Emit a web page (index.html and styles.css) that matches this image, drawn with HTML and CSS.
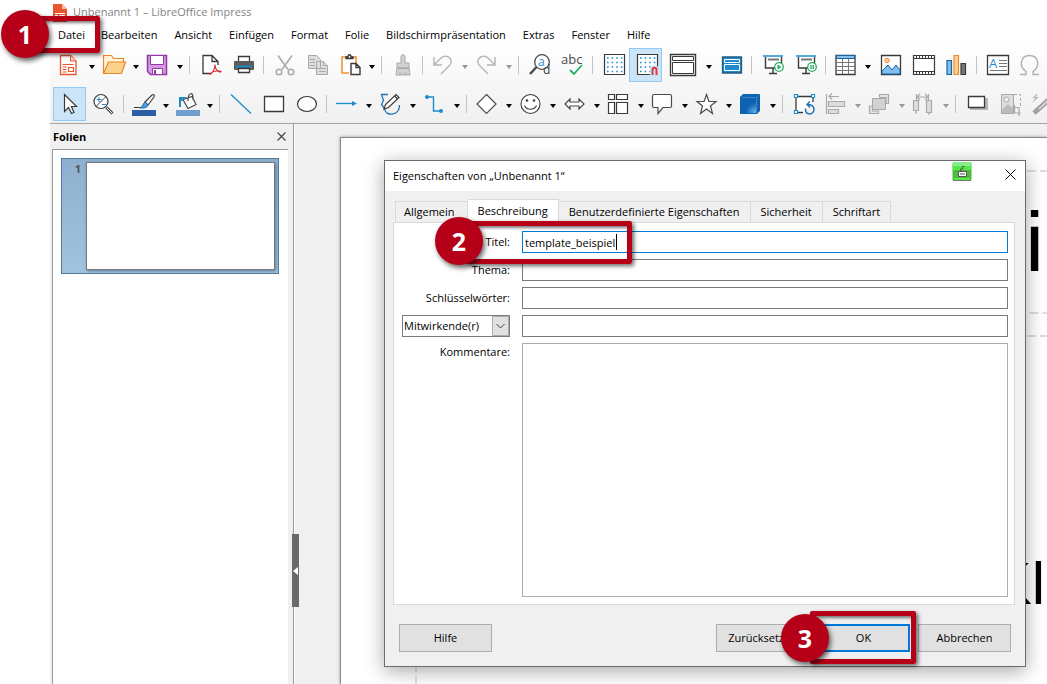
FILE: index.html
```html
<!DOCTYPE html>
<html lang="de">
<head>
<meta charset="utf-8">
<title>Unbenannt 1 – LibreOffice Impress</title>
<link rel="stylesheet" href="styles.css">
</head>
<body>
<div class="app">
  <header class="top">
    <div class="titlebar">
      <svg class="doc" width="14" height="18" viewBox="0 0 14 18"><path fill="#e8562f" d="M0 0h9l5 5v13H0z"/><path fill="#f9b9a2" d="M9 0l5 5H9z"/><path stroke="#fff" fill="none" d="M2 9.500h10M2 11.500h3M2 13.500h3M6.500 11.500h5v3h-5z"/></svg>
      <span>Unbenannt 1 – LibreOffice Impress</span>
    </div>
    <nav class="menu">
      <div class="marked"><button>Datei</button><span class="frame frame-menu"></span><span class="step step-menu">1</span></div>
      <button>Bearbeiten</button><button>Ansicht</button><button>Einfügen</button><button>Format</button><button>Folie</button><button>Bildschirmpräsentation</button><button>Extras</button><button>Fenster</button><button>Hilfe</button>
    </nav>
    <div class="toolbar" role="toolbar" aria-label="Standard">
      <button class="tool" aria-label="Neu"><svg viewBox="0 0 24 24"><path fill="#fff" stroke="#e8562f" stroke-width="1.300" d="M2.500 2.500h10l5.500 5.500v13.500H2.500z"/><path fill="#fbd5c8" stroke="#e8562f" d="M12.500 2.500v5.500H18"/><path fill="none" stroke="#e8562f" stroke-width="1.200" d="M4.500 11.500h11M4.500 14h4M4.500 16.500h4M4.500 19h4M10.500 14.500h5v4h-5z"/></svg></button><button class="drop" aria-label="Vorlagen"></button>
      <button class="tool" aria-label="Öffnen"><svg viewBox="0 0 24 24"><path fill="#fff3d6" stroke="#e8862f" stroke-width="1.200" d="M1.500 20.500v-18h8l2 3h10v4"/><path fill="#fad28c" stroke="#e8862f" stroke-width="1.200" d="M1.500 20.500l5-11.500h17l-4 11.500z"/></svg></button><button class="drop" aria-label="Zuletzt verwendet"></button>
      <button class="tool" aria-label="Speichern"><svg viewBox="0 0 24 24"><path fill="#d49be0" stroke="#9437a4" stroke-width="1.500" d="M1.500 2.500h19v19h-16l-3-3z"/><path fill="#fff" stroke="#9437a4" d="M4.500 2.500h13v9h-13zM6.500 15.500h10v6h-10z"/><path fill="#9437a4" d="M8 17h2v4H8z"/></svg></button><button class="drop" aria-label="Speichern unter"></button>
      <i class="sep"></i>
      <button class="tool" aria-label="Als PDF exportieren"><svg viewBox="0 0 24 24"><path fill="#fff" stroke="#3a3a38" stroke-width="1.300" d="M12 20.500H5v-18h9l6 6V12M14 2.500v6h6"/><path fill="none" stroke="#d8343c" stroke-width="1.100" d="M17 11.500c0 5-3 9-5 10-1-2 8-5 11-3-2 2-6-2-6-7z"/></svg></button>
      <button class="tool" aria-label="Drucken"><svg viewBox="0 0 24 24"><path fill="#fff" stroke="#3a3a38" stroke-width="1.300" d="M7.500 9V3.500h11V9"/><rect x="3" y="8" width="20" height="9" rx="1" fill="#5b5b59"/><path stroke="#1e8bcd" stroke-width="2" d="M5 13.500h16"/><path fill="#fff" stroke="#3a3a38" stroke-width="1.300" d="M7.500 15.500h11v4h-11z"/></svg></button>
      <i class="sep"></i>
      <button class="tool" aria-label="Ausschneiden"><svg viewBox="0 0 24 24"><g fill="none" stroke="#a9a9a9" stroke-width="1.500"><path d="M6 2.500l10 14M20 2.500l-10 14"/><circle cx="7" cy="19" r="2.800"/><circle cx="19" cy="19" r="2.800"/></g></svg></button>
      <button class="tool" aria-label="Kopieren"><svg viewBox="0 0 24 24"><g fill="#ddd" stroke="#a9a9a9"><path d="M3.500 2.500h8l4 4v9h-12zM11.500 8.500h7l4 4v9h-11z"/><path d="M5 6.500h5M5 9.500h5M5 12.500h5M14 15.500h7M14 18.500h7M18.500 8.500v4h4"/></g></svg></button>
      <button class="tool" aria-label="Einfügen"><svg viewBox="0 0 24 24"><path fill="#fff" stroke="#ee9433" stroke-width="1.600" d="M11 20H4V4h14v6"/><path fill="#fff" stroke="#3a3a38" stroke-width="1.400" d="M8 5.500V4h2c0-3 3-3 3 0h2v1.500zM13 10.500h5l4 4v7h-9zM18 10.500v4h4"/></svg></button><button class="drop" aria-label="Inhalte einfügen"></button>
      <i class="sep"></i>
      <button class="tool" aria-label="Format übertragen"><svg viewBox="0 0 24 24"><g fill="#d2d2d2" stroke="#a9a9a9"><path d="M11 10V3q2-3 4 0v7h4v5H7v-5zM7 15h12l1 7H6z"/><path d="M7 15.500h12M10 22v-3M13 22v-2M16 22v-3"/></g></svg></button>
      <i class="sep"></i>
      <button class="tool" aria-label="Rückgängig"><svg viewBox="0 0 24 24"><path fill="none" stroke="#b4b4b4" stroke-width="1.400" d="M3 4v8h8M3 12L10 5c6-5 14 2 8 8l-8 8"/></svg></button><button class="drop off" aria-label="Rückgängig-Liste"></button>
      <button class="tool" aria-label="Wiederherstellen"><svg viewBox="0 0 24 24"><path fill="none" stroke="#b4b4b4" stroke-width="1.400" d="M20 4v8h-8M20 12L13 5C7 0-1 7 5 13l8 8"/></svg></button><button class="drop off" aria-label="Wiederherstellen-Liste"></button>
      <i class="sep"></i>
      <button class="tool" aria-label="Suchen und Ersetzen"><svg viewBox="0 0 24 24"><circle cx="15" cy="9" r="7.300" fill="#fff" stroke="#4b4b49" stroke-width="1.300"/><path stroke="#4b4b49" stroke-width="2.500" d="M9.500 14L3 21"/><text class="glyph" x="11" y="13" font-size="12" fill="#1e8bcd">a</text><text class="glyph" x="16" y="21" font-size="12" fill="#3a3a38">d</text></svg></button>
      <button class="tool" aria-label="Rechtschreibung"><svg viewBox="0 0 24 24"><text class="glyph" x="1" y="11" font-size="13" fill="#4b4b49">abc</text><path fill="none" stroke="#27ae60" stroke-width="1.800" d="M10 17l4 4 8-9"/></svg></button>
      <i class="sep"></i>
      <button class="tool" aria-label="Raster anzeigen"><svg viewBox="0 0 24 24"><path fill="#fff" stroke="#3a3a38" stroke-width="1.200" d="M3.500 1.500h20v20h-20z"/><path stroke="#1e8bcd" stroke-width="1.600" stroke-dasharray="1.600 3" d="M6 5h17M6 9.500h17M6 14h17M6 18.500h17"/></svg></button>
      <button class="tool on" aria-label="Am Raster fangen"><svg viewBox="0 0 24 24"><path fill="#fff" stroke="#3a3a38" stroke-width="1.200" d="M3.500 1.500h20v20h-20z"/><path stroke="#1e8bcd" stroke-width="1.600" stroke-dasharray="1.600 3" d="M6 5h17M6 9.500h17M6 14h12M6 18.500h10"/><path fill="none" stroke="#cce4f7" stroke-width="5" d="M18.500 23v-6c0-3 4-3 4 0v6"/><path fill="none" stroke="#e0393e" stroke-width="2" d="M18.500 22v-5c0-3 4-3 4 0v5"/></svg></button>
      <button class="tool wide" aria-label="Ansichten"><svg viewBox="0 0 28 24"><g fill="#fff" stroke="#3a3a38" stroke-width="1.400"><path d="M1.500 1.500h25v21h-25z"/><path stroke-width="1" d="M3.500 3.500h21v4h-21zM3.500 9.500h21v11h-21z"/></g></svg></button><button class="drop" aria-label="Ansichten wählen"></button>
      <button class="tool" aria-label="Masterfolie"><svg viewBox="0 0 24 24"><path fill="#1e8bcd" stroke="#245a80" stroke-width="1.300" d="M3.500 4h19v16h-19z"/><path fill="#1e8bcd" stroke="#fff" d="M5.500 6.500h15v3h-15zM5.500 11.500h15v6h-15z"/></svg></button>
      <i class="sep"></i>
      <button class="tool" aria-label="Mit der ersten Folie beginnen"><svg viewBox="0 0 24 24"><path stroke="#1e8bcd" stroke-width="1.500" d="M3 3h20"/><path fill="#fff" stroke="#3a3a38" stroke-width="1.400" d="M5.500 4v11h16V4M13 15v5M9 20.500h8"/><path stroke="#777" stroke-width="2" d="M8 6.500h11"/><circle cx="19" cy="14" r="4.300" fill="#fff" stroke="#27ae60" stroke-width="1.300"/><path fill="#27ae60" d="M17.500 11.500l4 2.500-4 2.500z"/></svg></button>
      <button class="tool" aria-label="Mit der aktuellen Folie beginnen"><svg viewBox="0 0 24 24"><path stroke="#1e8bcd" stroke-width="1.500" d="M3 3h20"/><path fill="#fff" stroke="#3a3a38" stroke-width="1.400" d="M5.500 4v11h16V4M13 15v5M9 20.500h8"/><path stroke="#777" stroke-width="2" d="M8 6.500h11"/><circle cx="19" cy="14" r="4.300" fill="#fff" stroke="#27ae60" stroke-width="1.300"/><path stroke="#27ae60" stroke-width="1.400" d="M18 12v4M20.300 12v4"/></svg></button>
      <i class="sep"></i>
      <button class="tool" aria-label="Tabelle"><svg viewBox="0 0 24 24"><path fill="#fff" stroke="#3a3a38" stroke-width="1.300" d="M2 2.500h19v19H2z"/><path fill="#83beec" stroke="#1565a7" d="M2.500 2.500h18v3h-18z"/><path stroke="#777" d="M2 9.500h19M2 13.500h19M2 17.500h19M8.500 6v15M14.500 6v15"/></svg></button><button class="drop" aria-label="Tabellengröße"></button>
      <button class="tool" aria-label="Bild"><svg viewBox="0 0 24 24"><path fill="#fff" stroke="#3a3a38" stroke-width="1.300" d="M3.500 2.500h19v19h-19z"/><path fill="#83beec" stroke="#1565a7" d="M4 21v-3l6-6 4 5 4-5 4 5v4z"/><circle cx="9" cy="7.500" r="2.200" fill="#fbd28c" stroke="#ee8733"/></svg></button>
      <button class="tool" aria-label="Audio oder Video"><svg viewBox="0 0 24 24"><path fill="#fff" stroke="#3a3a38" stroke-width="1.200" d="M2.500 2.500h21v19h-21zM2.500 5.500h21M2.500 18.500h21"/><path stroke="#3a3a38" stroke-width="2" stroke-dasharray="1 2" d="M5 4h18M5 20h18"/></svg></button>
      <button class="tool" aria-label="Diagramm"><svg viewBox="0 0 24 24"><path fill="#83beec" stroke="#1565a7" stroke-width="1.200" d="M3 7.500h4.500v14H3z"/><path fill="#fbd28c" stroke="#ee8733" stroke-width="1.200" d="M10 2.500h4.500v19H10z"/><path fill="#797774" stroke="#3a3a38" stroke-width="1.200" d="M17 10.500h4.500v11H17z"/></svg></button>
      <i class="sep"></i>
      <button class="tool" aria-label="Textfeld"><svg viewBox="0 0 24 24"><path fill="#fff" stroke="#3a3a38" stroke-width="1.300" d="M2.500 2.500h21v19h-21z"/><path stroke="#777" d="M14 7.500h8M14 10.500h8M14 13.500h8M5 17.500h17"/><text class="glyph" x="4" y="15" font-size="13" fill="#1e8bcd">A</text></svg></button>
      <button class="tool" aria-label="Sonderzeichen"><svg viewBox="0 0 24 24"><path fill="none" stroke="#b0b0b0" stroke-width="1.400" d="M2 21.500h6v-3C0 13 3 2.500 11.500 2.500S23 13 15 18.500v3h6"/></svg></button>
    </div>
    <div class="toolbar" role="toolbar" aria-label="Zeichnung">
      <button class="tool on" aria-label="Auswählen"><svg viewBox="0 0 24 24"><path fill="#fff" stroke="#3a3a38" stroke-width="1.200" d="M6.500 2.500v17l4-4 3 6 2.500-1-2.500-6h5z"/></svg></button>
      <button class="tool" aria-label="Zoom"><svg viewBox="0 0 24 24"><circle cx="10" cy="9.500" r="7" fill="#fff" stroke="#3a3a38" stroke-width="1.200"/><path stroke="#3a3a38" d="M15 4.500l-10 10"/><path stroke="#4b4b49" stroke-width="3" d="M15.500 15.500l6 6"/><path stroke="#fff" d="M16 16l5 5"/><path stroke="#1e8bcd" d="M8 5v5M5.500 7.500h5M11 12.500h4"/></svg></button>
      <i class="sep"></i>
      <button class="tool" aria-label="Linienfarbe"><svg viewBox="0 0 24 24"><path fill="#2a5fa5" d="M0 18h24v6H0z"/><path fill="#fff" stroke="#3a3a38" stroke-width="1.100" d="M13 10l7-7c2-1 3 0 2 2l-6 8z"/><path fill="#4da3dd" stroke="#1565a7" d="M13 10l3 3c-1 3-4 3-8 3 3-1 3-5 5-6z"/><path stroke="#3a3a38" d="M2 15.500h6"/></svg></button><button class="drop" aria-label="Linienfarbe wählen"></button>
      <button class="tool" aria-label="Füllfarbe"><svg viewBox="0 0 24 24"><path fill="#729fcf" d="M0 18h24v6H0z"/><path fill="#fff" stroke="#4b4b49" stroke-width="1.200" d="M7 7.500l9-3 4 8-8 4zM12 9c0-9 5-9 5-4v3"/><path fill="#1e8bcd" d="M3 5h8L7 8l-1 1H5v6H3z"/></svg></button><button class="drop" aria-label="Füllfarbe wählen"></button>
      <i class="sep"></i>
      <button class="tool" aria-label="Linie"><svg viewBox="0 0 24 24"><path stroke="#1e8bcd" stroke-width="1.300" d="M3 2.500l20 19"/></svg></button>
      <button class="tool" aria-label="Rechteck"><svg viewBox="0 0 24 24"><path fill="#fff" stroke="#3a3a38" stroke-width="1.300" d="M3.500 4.500h19v15h-19z"/></svg></button>
      <button class="tool" aria-label="Ellipse"><svg viewBox="0 0 24 24"><ellipse cx="13" cy="12" rx="9.500" ry="7.500" fill="#fff" stroke="#3a3a38" stroke-width="1.200"/></svg></button>
      <i class="sep"></i>
      <button class="tool" aria-label="Linien und Pfeile"><svg viewBox="0 0 24 24"><path stroke="#1e8bcd" stroke-width="1.300" d="M1 11.500h17"/><path fill="#1e8bcd" d="M17 9l5 2.500-5 2.500z"/></svg></button><button class="drop" aria-label="Linien wählen"></button>
      <button class="tool" aria-label="Kurven und Polygone"><svg viewBox="0 0 24 24"><path fill="none" stroke="#1e73b7" stroke-width="1.300" d="M9 2.500H2.500l2 6-2 4 3 4C6 25 21 24 20.500 13"/><path fill="#fff" stroke="#3a3a38" stroke-width="1.200" d="M5 17l1.500-4.500L17 2.500l3 3L9.500 15.500zM15.500 4l3 3"/></svg></button><button class="drop" aria-label="Kurven wählen"></button>
      <button class="tool" aria-label="Verbinder"><svg viewBox="0 0 24 24"><path fill="none" stroke="#1e8bcd" stroke-width="1.400" d="M4 5h6.500v14H17"/><circle cx="4" cy="5" r="2" fill="#1e8bcd"/><circle cx="18" cy="19" r="2" fill="#1e8bcd"/></svg></button><button class="drop" aria-label="Verbinder wählen"></button>
      <i class="sep"></i>
      <button class="tool" aria-label="Standardformen"><svg viewBox="0 0 24 24"><path fill="#fff" stroke="#4b4b49" stroke-width="1.200" d="M11.500 2.500l9.500 9.500-9.500 9.500L2 12z"/></svg></button><button class="drop" aria-label="Standardformen wählen"></button>
      <button class="tool" aria-label="Symbolformen"><svg viewBox="0 0 24 24"><g fill="#fff" stroke="#3a3a38" stroke-width="1.100"><circle cx="11.500" cy="12" r="9.500"/><circle cx="8" cy="8.500" r=".8"/><circle cx="15" cy="8.500" r=".8"/><path d="M5.500 13.500c2 5 10 5 12 0"/></g></svg></button><button class="drop" aria-label="Symbolformen wählen"></button>
      <button class="tool" aria-label="Blockpfeile"><svg viewBox="0 0 24 24"><path fill="#fff" stroke="#4b4b49" stroke-width="1.200" d="M2 12l5-5v3h9V7l5 5-5 5v-3H7v3z"/></svg></button><button class="drop" aria-label="Blockpfeile wählen"></button>
      <button class="tool" aria-label="Flussdiagramm"><svg viewBox="0 0 24 24"><path fill="#fff" stroke="#3a3a38" stroke-width="1.200" d="M1.500 2.500h6v5h-6zM9.500 2.500h11v5h-11zM1.500 10.500h6v11h-6zM9.500 10.500h11v11h-11z"/></svg></button><button class="drop" aria-label="Flussdiagramm wählen"></button>
      <button class="tool" aria-label="Legenden"><svg viewBox="0 0 24 24"><path fill="#fff" stroke="#4b4b49" stroke-width="1.200" d="M3 2.500h16q1.500 0 1.500 1.500v10q0 1.500-1.500 1.500h-7l-5 6v-6H3q-1.500 0-1.500-1.500V4Q1.500 2.500 3 2.500z"/></svg></button><button class="drop" aria-label="Legenden wählen"></button>
      <button class="tool" aria-label="Sterne"><svg viewBox="0 0 24 24"><path fill="#fff" stroke="#4b4b49" stroke-width="1.200" d="M11.500 2.500l2.400 7H21l-5.500 4.500 2 7.500-6-4.500-6 4.500 2-7.500L2 9.500h7.100z"/></svg></button><button class="drop" aria-label="Sterne wählen"></button>
      <button class="tool" aria-label="3D-Objekte"><svg viewBox="0 0 24 24"><defs><radialGradient id="cube" cx="1" cy="1" r="1"><stop offset="0" stop-color="#7dbdf0"/><stop offset=".8" stop-color="#0b63b2"/></radialGradient></defs><path fill="#0b63b2" d="M4 2h17v17l-3 3H1V5z"/><path fill="url(#cube)" d="M4 8h14v13H4z"/><path stroke="#3f86c8" fill="none" d="M3 5.500h14.500V21M17.500 5.500l3-3"/></svg></button><button class="drop" aria-label="3D-Objekte wählen"></button>
      <i class="sep"></i>
      <button class="tool" aria-label="Drehen"><svg viewBox="0 0 24 24"><path fill="#fff" stroke="#3a3a38" stroke-width="1.300" d="M12 20.500H5v-16h17V10"/><g fill="#fff" stroke="#1e8bcd" stroke-width="1.200"><path d="M3.500 2.500h3v3h-3zM20.500 2.500h3v3h-3zM3.500 18.500h3v3h-3z"/></g><path fill="none" stroke="#1e73b7" stroke-width="1.500" d="M14.500 16.500c-1 7 8 7 8.500 1 0-3-2-5-7-5M19 9.500l-3 3 3 3"/></svg></button>
      <button class="tool" aria-label="Ausrichten"><svg viewBox="0 0 24 24"><path fill="#ddd" stroke="#a9a9a9" stroke-width="1.200" d="M4.500 9.500h16v5h-16zM4.500 17.500h10v4h-10z"/><path fill="none" stroke="#a9a9a9" stroke-width="1.200" d="M2.500 2v20M15 4.500H5M8 1.500l-3 3 3 3"/></svg></button><button class="drop off" aria-label="Ausrichtung wählen"></button>
      <button class="tool" aria-label="Anordnen"><svg viewBox="0 0 24 24"><path fill="#e6e6e6" stroke="#a9a9a9" stroke-width="1.200" d="M11.500 5V2.500h9v9H18v-6h-6.500M1.500 14v7.500h9V19h-6v-5z"/><path fill="#d2d2d2" stroke="#a9a9a9" d="M4.500 6.500h13v11h-13z"/></svg></button><button class="drop off" aria-label="Anordnung wählen"></button>
      <button class="tool" aria-label="Verteilen"><svg viewBox="0 0 24 24"><path fill="#ddd" stroke="#a9a9a9" stroke-width="1.200" d="M1.500 8.500h5v10h-5zM14.500 8.500h5v12h-5z"/><path fill="none" stroke="#a9a9a9" stroke-width="1.200" d="M4 19v3M17 21v2M4.500 2v6M16.500 2v6M5 5h11M8 2L5 5l3 3M13 2l3 3-3 3"/></svg></button><button class="drop off" aria-label="Verteilung wählen"></button>
      <i class="sep"></i>
      <button class="tool" aria-label="Schatten"><svg viewBox="0 0 24 24"><path fill="#b8b8b8" d="M6 6h18v12H6z"/><path fill="#fff" stroke="#3a3a38" stroke-width="1.300" d="M4.500 4.500h16v11h-16z"/></svg></button>
      <button class="tool" aria-label="Zuschneiden"><svg viewBox="0 0 24 24"><path fill="#ddd" stroke="#a9a9a9" d="M4.500 2.500h12v19h-12z"/><circle cx="9.500" cy="7.500" r="2.500" fill="#eee" stroke="#a9a9a9"/><path fill="#bbb" d="M5 18l6-6 5 5v4H5z"/><path fill="none" stroke="#a9a9a9" stroke-dasharray="3 2" d="M17 2.500h6.500V14"/><path fill="none" stroke="#a9a9a9" stroke-width="1.200" d="M17.500 13v8H24M15 15.500h7V24"/></svg></button>
      <button class="tool" aria-label="Punkte"><svg viewBox="0 0 24 24"><path fill="#bbb" d="M8 1L2 6h3l-3 5 7-6H6z"/><path stroke="#a0a0a0" stroke-width="5" d="M4 21L23 4"/><path stroke="#ddd" stroke-width="1.500" d="M9 17L23 4"/></svg></button>
    </div>
  </header>
  <main class="work">
    <aside class="panel">
      <div class="panel-head"><h2>Folien</h2><button class="close" aria-label="Schließen"><svg width="9" height="9" viewBox="0 0 9 9"><path stroke="#444" stroke-width="1.100" d="M.5.5l8 8M8.500.5l-8 8"/></svg></button></div>
      <div class="slides">
        <div class="slide"><span class="num">1</span><div class="thumb"></div></div>
      </div>
    </aside>
    <div class="splitter"><button class="handle" aria-label="Bereich ausblenden"><svg width="5" height="8" viewBox="0 0 5 8"><path fill="#fff" d="M5 0v8L0 4z"/></svg></button></div>
    <section class="canvas">
      <div class="page">
        <svg class="guide guide-title"><rect width="110%" height="142" x="1" y="1"/></svg>
        <svg class="guide guide-body"><rect width="110%" height="500" x="1" y="1"/></svg>
        <span class="big big-title">i</span><span class="big big-body">Kl</span>
      </div>
    </section>
  </main>
</div>

<form class="dialog" role="dialog" aria-labelledby="dlg-title">
  <div class="dialog-head">
    <h1 id="dlg-title">Eigenschaften von „Unbenannt 1“</h1>
    <svg class="badge" width="20" height="20" viewBox="0 0 20 20"><rect x=".5" y=".5" width="19" height="18" rx="1" fill="#4fbb3a"/><path fill="#86ee86" d="M1 0h18v4H1z"/><path fill="#55e84a" d="M1 4h18v4H1zM2 16h16v2H2z"/><path stroke="#777" d="M1 18.500h18"/><path fill="#fff" stroke="#555" d="M6.500 9.500h8v5h-8z"/><path stroke="#555" fill="none" d="M8.500 9.500V7h2V4.500h2M8 12h5"/></svg>
    <button type="button" class="close" aria-label="Schließen"><svg width="11" height="11" viewBox="0 0 11 11"><path stroke="#000" d="M.5.5l10 10M10.500.5l-10 10"/></svg></button>
  </div>
  <div class="dialog-body">
    <div class="tabs" role="tablist">
      <button type="button" role="tab">Allgemein</button><button type="button" role="tab" class="current" aria-selected="true">Beschreibung</button><button type="button" role="tab">Benutzerdefinierte Eigenschaften</button><button type="button" role="tab">Sicherheit</button><button type="button" role="tab">Schriftart</button>
    </div>
    <div class="fields">
      <label for="titel">Titel:</label>
      <div class="marked"><input id="titel" class="focus" type="text" value="template_beispiel"><span class="caret"></span><span class="frame frame-field"></span><span class="step step-field">2</span></div>
      <label for="thema">Thema:</label><input id="thema" type="text">
      <label for="worte">Schlüsselwörter:</label><input id="worte" type="text">
      <select aria-label="Rolle"><option>Mitwirkende(r)</option></select><input aria-label="Mitwirkende" type="text">
      <label class="for-area" for="komm">Kommentare:</label><textarea id="komm"></textarea>
    </div>
    <div class="actions">
      <button type="button" class="help">Hilfe</button>
      <button type="button">Zurücksetzen</button>
      <div class="marked"><button type="button" class="primary">OK</button><span class="frame frame-ok"></span><span class="step step-ok">3</span></div>
      <button type="button">Abbrechen</button>
    </div>
  </div>
</form>
</body>
</html>
```
FILE: styles.css
```css
* { box-sizing: border-box; }
html, body { height: 100%; margin: 0; }
body { position: relative; overflow: hidden; background: #fff; color: #000; font: 11px/16px "Open Sans", "Noto Sans", sans-serif; }
button, input, select, textarea { font: inherit; color: inherit; margin: 0; }
button { border: 0; padding: 0; background: none; }
h1, h2 { margin: 0; font-size: 11px; }

.app { display: flex; flex-direction: column; height: 100%; margin-left: 50px; }
.top { border-bottom: 1px solid #a5a5a5; background: linear-gradient(#fff 40px, #f0f0f0); padding-bottom: 2px; }
.titlebar { display: flex; gap: 6px; height: 25px; padding: 4px 0 0 3px; color: #858585; }
.menu { display: flex; gap: 1px; height: 20px; align-items: center; }
.menu button { padding: 0 8px; line-height: 20px; white-space: nowrap; }
.menu .marked button { padding-right: 7px; }
.toolbar { display: flex; height: 34px; margin-top: 3px; padding-left: 3px; }
.toolbar + .toolbar { margin-top: 5px; }
.tool { flex: none; display: flex; align-items: center; justify-content: center; width: 33px; border: 1px solid transparent; }
.tool svg { flex: none; width: 24px; height: 24px; overflow: visible; }
.tool.wide { width: 41px; }
.tool.wide svg { width: 28px; }
.tool.on { background: #cce4f7; border-color: #91c9f7; }
.glyph { font-family: "Open Sans", sans-serif; }
.drop { flex: none; width: 11px; display: flex; align-items: center; justify-content: center; padding-top: 4px; }
.drop::before { content: ""; border: 3px solid transparent; border-top: 4px solid #000; border-bottom: 0; }
.drop.off::before { border-top-color: #999; }
.sep { flex: none; width: 8px; display: flex; justify-content: center; align-items: center; }
.sep::before { content: ""; width: 1px; height: 18px; background: #c3c3c3; }

.work { flex: 1; display: flex; min-height: 0; background: #f0f0f0; }
.panel { flex: none; width: 238px; display: flex; flex-direction: column; padding-left: 2px; }
.panel-head { display: flex; justify-content: space-between; align-items: center; height: 25px; padding: 1px 2px 0 1px; }
.slides { flex: 1; background: #fff; border: solid #999; border-width: 1px 0 0 1px; padding: 8px; }
.slide { display: flex; width: 218px; border: 1px solid #4f7a9c; background: linear-gradient(#8eb0ce, #a2c3df); padding: 3px; }
.num { width: 21px; padding-right: 5px; text-align: right; line-height: 14px; font-weight: bold; color: #555; }
.thumb { flex: 1; height: 108px; background: #fff; border: 1px solid #777; box-shadow: 1px 1px 3px #57799a; }
.splitter { flex: none; position: relative; width: 7px; border-right: 1px solid #fff; }
.splitter::before { content: ""; display: block; width: 1px; height: 100%; margin-left: auto; background: #999; }
.handle { position: absolute; top: 410px; left: 4px; width: 7px; height: 73px; background: #696969; display: flex; align-items: center; justify-content: flex-end; padding-right: 1px; z-index: 1; }
.canvas { flex: 1; display: flex; padding: 13px 0 0 45px; overflow: hidden; }
.page { position: relative; flex: 1; background: #fff; border: solid #8a8a8a; border-width: 1px 0 0 1px; box-shadow: 0 0 3px #999; }
.guide { position: absolute; left: 74px; width: calc(100% - 74px); fill: none; stroke: #bdbdbd; stroke-dasharray: 9 4; }
.guide-title { top: 32px; height: 144px; }
.guide-body { top: 197px; height: calc(100% - 197px); }
.big { position: absolute; font-family: "Liberation Sans", sans-serif; line-height: 1; }
.big-title { font-size: 84px; right: 3px; top: 62px; }
.big-body { font-size: 60px; right: 2px; top: 416px; }

.dialog { position: absolute; left: 384px; right: 21px; top: 160px; background: #f0f0f0; border: 1px solid #6b6b6b; box-shadow: 0 4px 18px rgba(0, 0, 0, .35); }
.dialog-head { display: flex; align-items: center; height: 30px; background: #fff; padding: 0 9px 0 8px; }
.dialog-head h1 { flex: 1; font-weight: normal; font-size: 11px; }
.badge { margin: 0 33px 9px 0; }
.dialog-body { padding: 8px 10px 14px 8px; }
.tabs { display: flex; align-items: flex-end; padding-left: 2px; height: 23px; }
.tabs button { height: 21px; padding: 0 10px; border: 1px solid #d9d9d9; border-width: 1px 1px 0 0; white-space: nowrap; }
.tabs button:first-child { border-left-width: 1px; padding-left: 8px; padding-right: 12px; }
.tabs .current { height: 24px; background: #fff; margin-bottom: -1px; padding-bottom: 2px; position: relative; }
.fields { display: grid; grid-template-columns: 108px 1fr; gap: 6px 12px; align-items: center; padding: 8px 6px 7px 8px; background: #fff; border: 1px solid #d9d9d9; }
.fields label { text-align: right; }
.fields .for-area { align-self: start; padding-top: 1px; }
.fields input, .fields textarea { display: block; width: 100%; height: 22px; padding: 0 2px; background: #fff; border: 1px solid #7a7a7a; border-radius: 0; outline: 0; }
.fields .focus { border-color: #0078d7; }
.fields textarea { height: 254px; border-color: #abadb3; resize: none; }
.fields select { width: 100%; height: 22px; padding: 0 1px; border: 1px solid #7a7a7a; border-radius: 0; appearance: none; background: url("data:image/svg+xml,%3Csvg xmlns='http://www.w3.org/2000/svg' width='17' height='20'%3E%3Cpath fill='%23e1e1e1' stroke='%23adadad' d='M.5.5h16v19H.5z'/%3E%3Cpath fill='none' stroke='%23444' d='M4.500 8l4 4 4-4'/%3E%3C/svg%3E") right center no-repeat #fff; }
.caret { position: absolute; left: 94px; top: 3px; width: 1px; height: 16px; background: #000; }
.actions { display: flex; gap: 8px; padding: 19px 4px 0 6px; }
.actions .help { margin-right: auto; }
.actions button { width: 93px; height: 28px; background: #e1e1e1; border: 1px solid #adadad; }
.actions .primary { border: 2px solid #0078d7; }

.marked { position: relative; }
.frame { position: absolute; border: 5px solid #b50018; border-radius: 2px; box-shadow: 2px 2px 4px rgba(0, 0, 0, .6), inset 2px 2px 3px rgba(0, 0, 0, .5); pointer-events: none; z-index: 2; }
.step { position: absolute; display: flex; align-items: center; justify-content: center; width: 48px; height: 48px; border-radius: 50%; background: #b50018; color: #fff; font: bold 25px/1 "Noto Sans", "Open Sans", sans-serif; box-shadow: 2px 3px 5px rgba(0, 0, 0, .6); z-index: 3; }
.frame-menu { left: -20px; top: -9px; width: 70px; height: 37px; }
.step-menu { left: -49px; top: -15px; }
.frame-field { left: -56px; top: -10px; width: 166px; height: 43px; }
.step-field { left: -87px; top: -14px; }
.frame-ok { left: -7px; top: -13px; width: 106px; height: 53px; }
.step-ok { left: -36px; top: -10px; }
```
